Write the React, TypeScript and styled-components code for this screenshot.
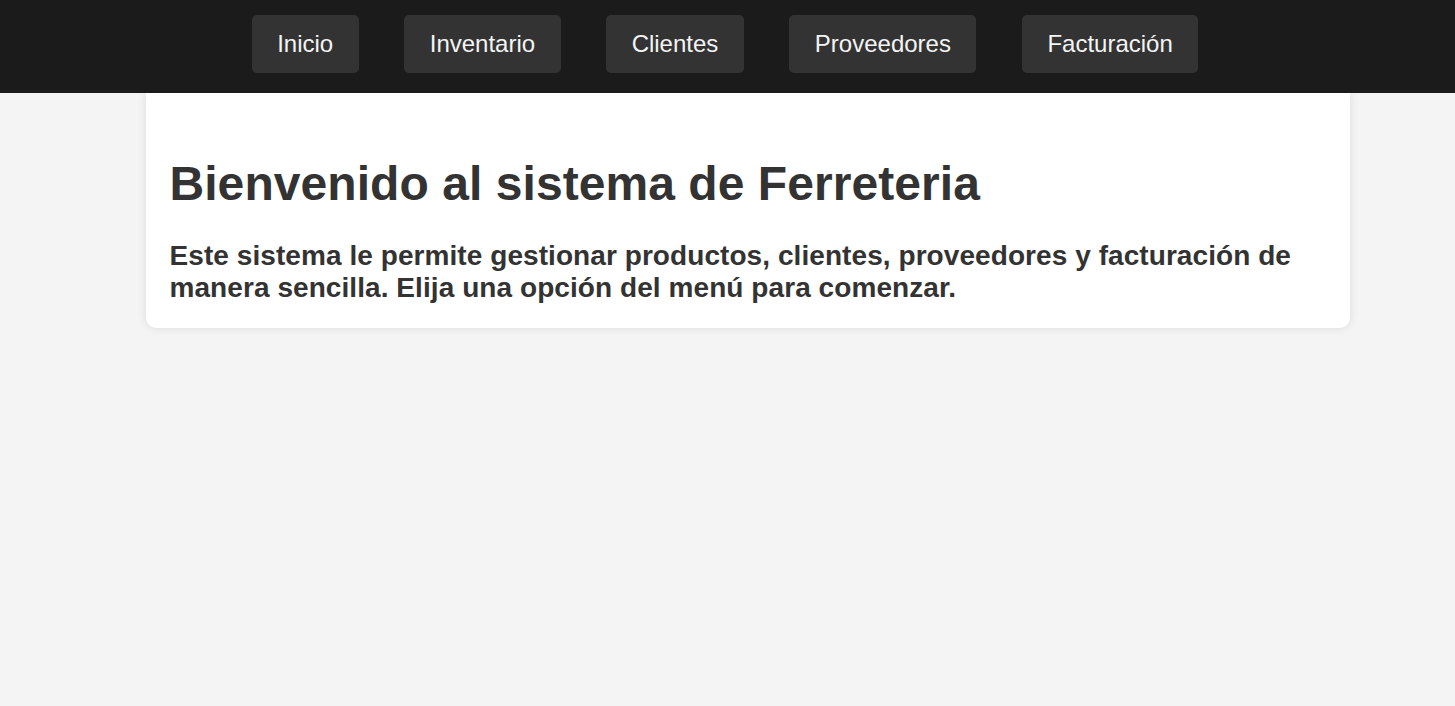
import React from "react";
import styled, { createGlobalStyle } from "styled-components";

const GlobalStyle = createGlobalStyle`
  html, body {
    margin: 0;
    padding: 0;
    background: #f4f4f4;
    font-family: "Liberation Sans", Arial, sans-serif;
    color: #333;
  }
`;

const Page = styled.div`
  min-height: 706px;
  background: #f4f4f4;
`;

const NavBar = styled.nav`
  height: 93px;
  box-sizing: border-box;
  background: #1b1b1b;
  display: flex;
  justify-content: center;
  align-items: flex-start;
  gap: 45.5px;
  padding: 15px 5px 0 0;
  position: relative;
  z-index: 2;
`;

const NavButton = styled.a`
  display: block;
  background: #333;
  color: #f4f4f4;
  font-size: 24px;
  line-height: 28px;
  padding: 15px 25.5px;
  border-radius: 5px;
  text-decoration: none;
  cursor: pointer;
  white-space: nowrap;
`;

const Card = styled.main`
  width: 80%;
  margin: 0 0 0 10%;
  padding: 63px 16px 24px 24px;
  background: #fff;
  border-radius: 0 0 10px 10px;
  box-shadow: 0 0 10px rgba(0, 0, 0, 0.1);
  position: relative;
  z-index: 1;
`;

const Title = styled.h1`
  margin: 0 0 29px;
  font-size: 48px;
  font-weight: 700;
  line-height: 55px;
  letter-spacing: 0.06px;
  color: #333;
`;

const Lead = styled.h2`
  margin: 0;
  font-size: 28px;
  font-weight: 700;
  line-height: 32px;
  letter-spacing: 0.07px;
  color: #333;
`;

const items = ["Inicio", "Inventario", "Clientes", "Proveedores", "Facturación"];

export default function App() {
  return (
    <Page>
      <GlobalStyle />
      <NavBar>
        {items.map((it) => (
          <NavButton key={it}>{it}</NavButton>
        ))}
      </NavBar>
      <Card>
        <Title>Bienvenido al sistema de Ferreteria</Title>
        <Lead>
          Este sistema le permite gestionar productos, clientes, proveedores y
          facturación de manera sencilla. Elija una opción del menú para
          comenzar.
        </Lead>
      </Card>
    </Page>
  );
}
